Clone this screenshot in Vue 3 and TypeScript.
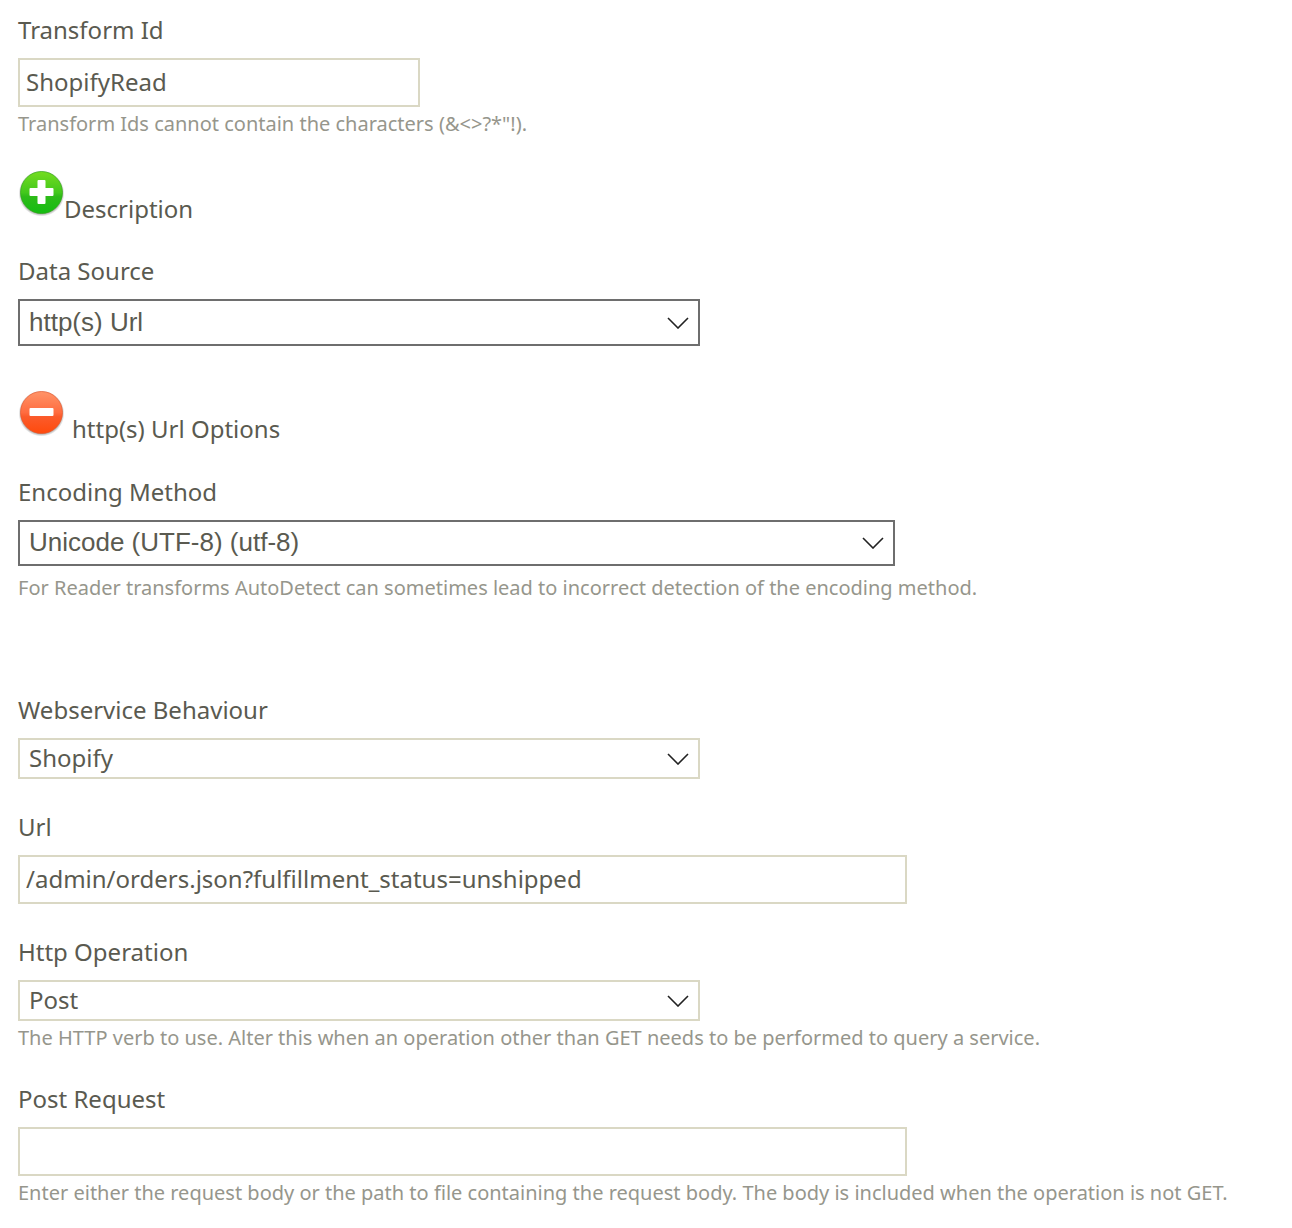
<script setup lang="ts">
import { reactive, ref } from 'vue'

interface Field {
  id: string
  label: string
  kind: 'text' | 'select'
  size: 'small' | 'medium' | 'large' | 'wide'
  strong?: boolean
  options?: string[]
  hint?: string
}

const values = reactive<Record<string, string>>({
  transformId: 'ShopifyRead',
  dataSource: 'http(s) Url',
  encoding: 'Unicode (UTF-8) (utf-8)',
  behaviour: 'Shopify',
  url: '/admin/orders.json?fulfillment_status=unshipped',
  operation: 'Post',
  postRequest: '',
})

const descriptionOpen = ref(false)
const optionsOpen = ref(true)

const identity: Field[] = [
  { id: 'transformId', label: 'Transform Id', kind: 'text', size: 'small', hint: 'Transform Ids cannot contain the characters (&<>?*"!).' },
]
const source: Field[] = [
  { id: 'dataSource', label: 'Data Source', kind: 'select', size: 'medium', strong: true, options: ['http(s) Url'] },
]
const encoding: Field[] = [
  { id: 'encoding', label: 'Encoding Method', kind: 'select', size: 'large', strong: true, options: ['Unicode (UTF-8) (utf-8)'], hint: 'For Reader transforms AutoDetect can sometimes lead to incorrect detection of the encoding method.' },
]
const request: Field[] = [
  { id: 'behaviour', label: 'Webservice Behaviour', kind: 'select', size: 'medium', options: ['Shopify'] },
  { id: 'url', label: 'Url', kind: 'text', size: 'wide' },
  { id: 'operation', label: 'Http Operation', kind: 'select', size: 'medium', options: ['Post'], hint: 'The HTTP verb to use. Alter this when an operation other than GET needs to be performed to query a service.' },
  { id: 'postRequest', label: 'Post Request', kind: 'text', size: 'wide', hint: 'Enter either the request body or the path to file containing the request body. The body is included when the operation is not GET.' },
]

type Section =
  | { type: 'fields'; name: string; fields: Field[] }
  | { type: 'toggle'; name: string; label: string }

const sections: Section[] = [
  { type: 'fields', name: 'identity', fields: identity },
  { type: 'toggle', name: 'description', label: 'Description' },
  { type: 'fields', name: 'source', fields: source },
  { type: 'toggle', name: 'options', label: 'http(s) Url Options' },
  { type: 'fields', name: 'encoding', fields: encoding },
  { type: 'fields', name: 'request', fields: request },
]

function isOpen(name: string): boolean {
  return name === 'description' ? descriptionOpen.value : optionsOpen.value
}
function toggle(name: string): void {
  if (name === 'description') descriptionOpen.value = !descriptionOpen.value
  else optionsOpen.value = !optionsOpen.value
}
</script>

<template>
  <form class="form" @submit.prevent>
    <template v-for="s in sections" :key="s.name">
      <button
        v-if="s.type === 'toggle'"
        type="button"
        class="toggle"
        :class="s.name"
        :aria-expanded="isOpen(s.name)"
        @click="toggle(s.name)"
      >
        <svg class="orb" viewBox="0 0 46 48" aria-hidden="true">
          <defs>
            <linearGradient :id="s.name + '-fill'" x1="0" y1="0" x2="0" y2="1">
              <template v-if="isOpen(s.name)">
                <stop offset="0" stop-color="#ff9468" />
                <stop offset="0.5" stop-color="#ff6c40" />
                <stop offset="0.6" stop-color="#fb5b2b" />
                <stop offset="1" stop-color="#ff4a0c" />
              </template>
              <template v-else>
                <stop offset="0" stop-color="#74dc20" />
                <stop offset="0.5" stop-color="#43c81c" />
                <stop offset="0.6" stop-color="#2dbb18" />
                <stop offset="1" stop-color="#14bd12" />
              </template>
            </linearGradient>
            <radialGradient :id="s.name + '-shade'">
              <stop offset="0.86" stop-color="#555" stop-opacity="0.6" />
              <stop offset="1" stop-color="#777" stop-opacity="0" />
            </radialGradient>
          </defs>
          <circle cx="23.5" cy="24.5" r="23" :fill="`url(#${s.name}-shade)`" />
          <circle
            cx="23.5" cy="23.5" r="21"
            :fill="`url(#${s.name}-fill)`"
            :stroke="isOpen(s.name) ? '#e8582c' : '#32a818'"
            stroke-opacity="0.7"
          />
          <rect x="11.5" y="19" width="24" height="8" rx="1" fill="#fff" />
          <rect v-if="!isOpen(s.name)" x="19.5" y="11" width="8" height="24" rx="1" fill="#fff" />
        </svg>
        <span>{{ s.label }}</span>
      </button>

      <section v-else class="group" :class="s.name">
        <div v-for="f in s.fields" :key="f.id" class="field">
          <label :for="f.id">{{ f.label }}</label>
          <div class="control" :class="[f.size, { strong: f.strong }]">
            <template v-if="f.kind === 'select'">
              <select :id="f.id" v-model="values[f.id]">
                <option v-for="o in f.options" :key="o">{{ o }}</option>
              </select>
              <svg class="chevron" viewBox="0 0 22 12" aria-hidden="true">
                <path d="M1 1 L11 11 L21 1" fill="none" stroke="#222" stroke-width="1.6" />
              </svg>
            </template>
            <input v-else :id="f.id" v-model="values[f.id]" type="text" spellcheck="false" />
          </div>
          <p v-if="f.hint" class="hint">{{ f.hint }}</p>
        </div>
      </section>
    </template>
  </form>
</template>

<style>
body {
  margin: 0;
  background: #fff;
}
</style>

<style scoped>
.form {
  display: flex;
  flex-direction: column;
  align-items: flex-start;
  padding: 14px 18px 16px;
  color: #5a5a50;
  font-family: "Noto Sans", "Open Sans", sans-serif;
  font-size: 24px;
  line-height: 32px;
}
.group {
  display: flex;
  flex-direction: column;
  gap: 32px;
  width: 100%;
}
.group.request {
  margin-top: 93px;
}
.field {
  display: flex;
  flex-direction: column;
  align-items: flex-start;
}
label {
  margin-bottom: 12px;
}
.control {
  position: relative;
  max-width: 100%;
}
.small { width: 402px; }
.medium { width: 682px; }
.large { width: 877px; }
.wide { width: 889px; }
input,
select {
  display: block;
  box-sizing: border-box;
  width: 100%;
  margin: 0;
  border: 2px solid #dad8c4;
  border-radius: 0;
  background: #fff;
  color: inherit;
  font: inherit;
  outline: 0;
}
input {
  height: 49px;
  padding: 0 6px 2px;
}
select {
  height: 41px;
  padding: 0 40px 2px 9px;
  appearance: none;
}
.strong select {
  height: 47px;
  border-color: #6e6e6e;
  font-family: "Liberation Sans", Arial, sans-serif;
  font-size: 26px;
}
.large select {
  height: 46px;
}
.chevron {
  position: absolute;
  top: 50%;
  right: 11px;
  width: 22px;
  height: 12px;
  margin-top: -6px;
  pointer-events: none;
}
.hint {
  margin: 4px 0 0;
  color: #96968c;
  font-size: 20px;
  line-height: 26px;
}
.encoding .hint {
  margin-top: 9px;
}
.toggle {
  display: flex;
  align-items: flex-end;
  margin: 32px 0 30px;
  padding: 0;
  border: 0;
  background: none;
  color: inherit;
  font: inherit;
  cursor: pointer;
}
.toggle.options {
  gap: 8px;
  margin: 43px 0 31px;
}
.orb {
  width: 46px;
  height: 48px;
  margin-bottom: 8px;
}
</style>
